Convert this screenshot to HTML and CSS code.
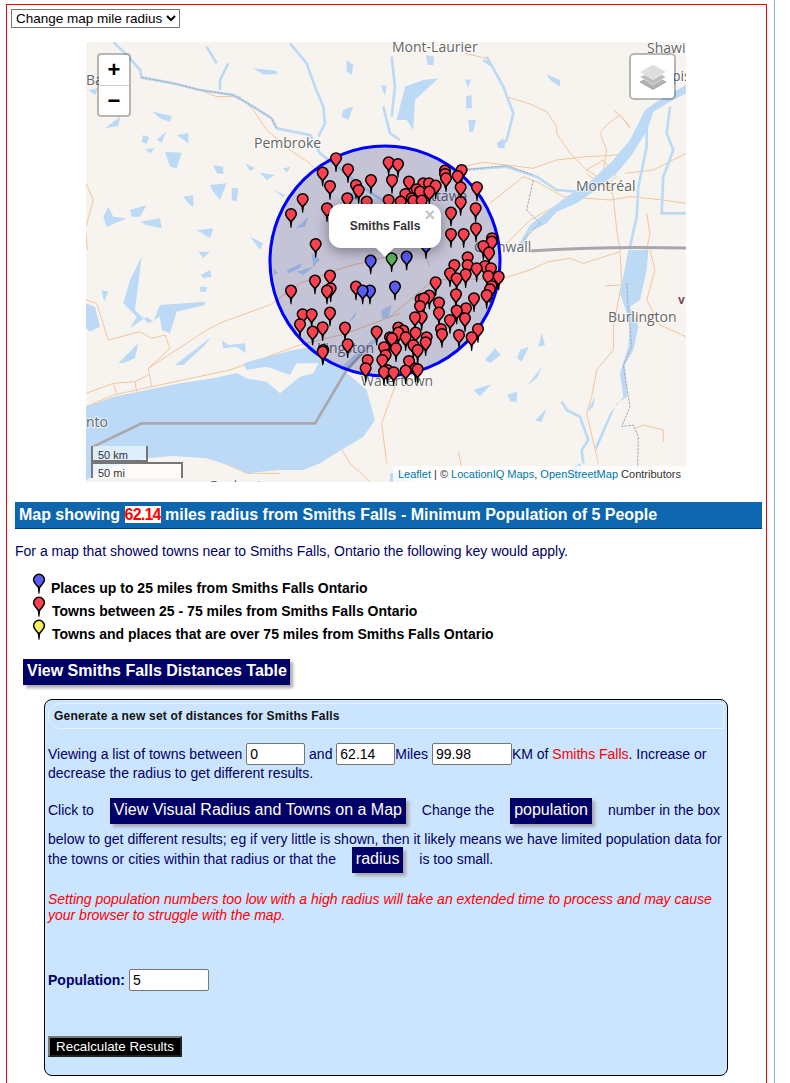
FILE: index.html
```html
<!DOCTYPE html>
<html lang="en">
<head>
<meta charset="utf-8">
<title>Smiths Falls radius map</title>
<link rel="stylesheet" href="styles.css">
</head>
<body>
<div class="page">
<div class="frame">
  <select class="radius-select"><option>Change map mile radius</option></select>

  <div class="map">
    <svg class="map-canvas" viewBox="86 42 600 440" width="600" height="440" aria-hidden="true">
      <defs>
        <g id="pin">
          <path d="M-5 12L5 12L1.500 41L-1.500 41Z" fill="#000"/>
          <path d="M-16 0A16 16 0 1 1 16 0C16 8 6 17 0 24C-6 17-16 8-16 0Z" stroke="#000" stroke-width="4.5"/>
        </g>
        <use id="r" href="#pin" fill="#fa4150"/>
        <use id="b" href="#pin" fill="#5a5cf5"/>
        <use id="g" href="#pin" fill="#5cb85c"/>
        <use id="y" href="#pin" fill="#f8f060"/>
      </defs>

      <!-- roads -->
      <g class="road" transform="scale(.33333)">
        <path d="M258 550L280 600L258 680M258 700L262 750"/>
        <path d="M420 235L520 250L600 270L650 290L720 290L760 330L800 390L870 450L930 490L1000 570"/>
      </g>
      <g class="road" transform="translate(390 0) scale(.33333)">
        <path d="M225 160L290 175L330 235L350 290L420 312L470 335L500 380L500 400L540 460L590 510L640 540"/>
        <path d="M215 500L280 487L350 495L430 505L500 480L590 470L680 465L700 455"/>
        <path d="M720 380L690 345L650 375L630 400L650 450L640 510L670 590L680 690L690 750"/>
        <path d="M770 340L740 395L710 440L670 490L620 560L530 600L420 660L340 740"/>
        <path d="M705 520L790 510L888 460"/>
        <path d="M300 610L400 530L440 545L520 590L660 600L720 590L820 600L888 610"/>
        <path d="M670 330L695 350L720 385M590 510L640 480L680 530L640 560L590 520M770 640L780 700L770 750"/>
      </g>
      <g class="road" transform="translate(80 250) scale(.33333)">
        <path d="M18 150L50 160L85 270L180 245L215 265L255 255L270 295L205 355L215 410L100 435L18 470"/>
        <path d="M205 355L380 240L430 215L570 165L660 100L800 50L960 10"/>
        <path d="M215 410L450 360L660 285L800 250L960 190"/>
        <path d="M18 430L100 400L165 395L205 375M100 400L110 430M165 395L170 425"/>
        <path d="M780 590L810 640L870 695M400 625L500 670L600 670"/>
        <path d="M950 395L905 520L920 640"/>
      </g>
      <g class="road" transform="translate(390 250) scale(.33333)">
        <path d="M340 85L420 60L475 35L540 25L580 40L690 5"/>
        <path d="M690 0L695 100L670 230L670 300L620 360L605 440L590 490L625 640"/>
        <path d="M780 0L795 60L770 150L810 225L888 260"/>
        <path d="M645 108L690 105M735 535L760 525L820 540L820 575M205 605L215 650"/>
        <path d="M120 50L100 0M0 200L130 90L340 85"/>
      </g>

      <!-- water -->
      <g class="water" transform="scale(.33333)">
        <path class="river" d="M340 126L385 170L420 210L425 232L520 250L600 270L700 285L760 320L815 355L830 385L930 405L960 460L1000 490L1060 540L1130 590L1200 640"/>
        <path class="river" d="M870 130L920 190L945 260L970 320L975 370L955 410M685 190L660 240L660 270M620 140L650 190M1150 320L1170 400L1200 420"/>
        <path d="M760 205L830 212L830 222L790 224ZM1040 180L1060 195L1055 225L1040 215ZM1142 255L1160 258L1155 288ZM1030 330L1060 318L1045 360L1025 350ZM457 335L515 348L510 365L480 355ZM315 385L360 350L355 378ZM430 405L448 412L440 432L425 425ZM470 420L498 395L485 428ZM530 405L565 400L565 430ZM435 447L465 445L450 460ZM495 455L545 458L530 505L510 500ZM640 495L670 500L670 522L650 520ZM735 490L765 505L750 512ZM780 518L825 525L800 540ZM850 505L872 500L860 518ZM630 555L680 550L660 600L640 575ZM695 565L715 565L710 605L695 600ZM820 570L855 585L850 592ZM550 590L580 585L580 622L565 610ZM325 620L340 650L380 655L320 680L310 650ZM390 630L440 615L420 650L395 650ZM420 665L480 655L485 685L440 675ZM590 690L640 685L630 715ZM750 710L790 730L780 750ZM265 270L295 265L285 285ZM888 685L925 650L915 680ZM1040 575L1075 580L1070 600L1045 600Z"/>
      </g>
      <g class="water" transform="translate(390 0) scale(.33333)">
        <path class="river" d="M220 510L350 500L440 530L500 570L560 575M290 170L340 260L370 340L350 420L330 440M840 320L830 400L850 450L820 530L815 640L888 640M770 350L770 440L745 560L740 650L720 740M5 170L15 260L5 350M280 180L310 200"/>
        <path d="M888 255L888 280L840 305L790 335L772 390L725 465L680 520L610 575L560 610L500 635L470 670L420 695L395 748L380 745L420 675L465 640L530 590L600 545L665 485L720 420L765 330L800 305ZM108 165L132 170L130 195L112 195ZM225 240L243 238L235 265ZM228 290L245 285L245 325L228 325ZM235 360L258 360L250 395L238 395ZM468 222L510 240L510 260L480 240ZM320 430L340 415L345 445L325 445ZM45 260L100 240L145 235L75 300L70 390L50 360L20 360Z"/>
      </g>
      <g class="water" transform="translate(80 250) scale(.33333)">
        <path d="M18 470L100 440L200 420L300 400L400 385L470 370L500 385L560 395L600 430L660 380L700 370L720 330L790 360L860 420L885 510L850 560L800 590L720 640L670 660L600 660L500 670L460 650L380 625L280 618L200 625L100 650L18 690Z"/>
        <path d="M490 340L560 320L640 300L700 290L730 340L650 340L630 375L560 350L500 360ZM18 160L45 170L60 230L30 245L18 235ZM65 120L85 125L72 155ZM185 20L150 90L130 160L170 200L150 235L200 200L220 215L240 165L375 155L375 165L290 185L270 250L245 240L240 200L205 220L165 180ZM115 340L175 280L165 325L130 340ZM285 345L395 260L370 290L310 345ZM425 270L445 285L495 280L497 310L470 290L430 295ZM355 5L390 5L370 25ZM362 75L390 60L395 80L370 85ZM358 110L382 110L378 125L362 125Z"/>
        <path d="M620 60L665 40L660 55L625 70ZM580 55L595 70L580 75ZM650 65L700 50L670 75ZM695 10L720 30L700 50ZM830 180L805 220L825 200ZM905 180L935 165L925 205L905 205ZM790 370L840 320L885 280L900 250L840 300L780 355Z"/>
      </g>
      <g class="water" transform="translate(390 250) scale(.33333)">
        <path d="M715 0L775 0L770 60L750 150L720 170L745 230L730 300L705 345L712 440L680 460L650 530L620 600L615 590L660 490L700 440L690 370L715 290L720 220L690 130ZM455 250L465 285L445 290ZM390 300L417 290L395 335L382 325ZM285 330L315 295L332 315L300 340ZM410 408L458 348L440 385ZM250 420L305 402L270 438ZM352 435L382 424L380 455L362 455ZM435 512L470 475L455 515ZM590 485L615 440L610 470ZM0 670L70 670L60 695L0 695ZM490 690L570 640L590 690Z"/>
        <path class="river" d="M515 455L530 480L570 500L595 570L575 600L580 640"/>
      </g>

      <!-- motorways and borders -->
      <g class="motorway" transform="translate(80 250) scale(.33333)">
        <path d="M40 590L185 520L705 520L800 360L870 285"/>
      </g>
      <path class="motorway" d="M530 251Q600 246 686 248"/>
      <g class="border" transform="translate(390 250) scale(.33333)">
        <path d="M710 100L715 180L725 290L700 345L715 440L720 470L695 530L730 525L745 560L742 690"/>
      </g>
      <g class="border" transform="translate(390 0) scale(.33333)">
        <path d="M430 540L410 630L450 670L400 720M215 510L350 497L430 525"/>
      </g>
      <g class="border" transform="scale(.33333)">
        <path d="M425 232L520 250L600 270L700 285L760 320L815 355L830 385"/>
      </g>

      <!-- labels -->
      <text class="label" x="392" y="52">Mont-Laurier</text>
      <text class="label" x="647" y="53">Shawi</text>
      <text class="label" x="672" y="81">pis</text>
      <text class="label" x="86" y="85">Ba</text>
      <text class="label" x="254" y="148">Pembroke</text>
      <text class="label" x="576" y="191">Montréal</text>
      <text class="label" x="608" y="322">Burlington</text>
      <text class="label" x="86" y="427">nto</text>
      <text class="label" x="210" y="491">Rochester</text>
      <text class="label" x="420" y="201">Ottawa</text>
      <text class="label" x="474" y="252">Cornwall</text>
      <text class="label" x="317" y="353">Kingston</text>
      <text class="label" x="361" y="386">Watertown</text>
      <text class="label state" x="678" y="304">v</text>

      <circle class="radius" cx="385" cy="261" r="115"/>

      <!-- markers -->
      <g transform="translate(270 140) scale(.33333)">
        <use href="#r" x="198" y="55"/><use href="#r" x="356" y="67"/><use href="#r" x="384" y="72"/><use href="#r" x="234" y="88"/><use href="#r" x="525" y="92"/><use href="#r" x="575" y="90"/><use href="#r" x="158" y="98"/><use href="#r" x="525" y="102"/><use href="#r" x="563" y="108"/><use href="#r" x="528" y="115"/><use href="#r" x="303" y="120"/><use href="#r" x="366" y="120"/><use href="#r" x="417" y="125"/><use href="#r" x="460" y="130"/><use href="#r" x="477" y="130"/><use href="#r" x="258" y="135"/><use href="#r" x="497" y="137"/><use href="#r" x="180" y="138"/><use href="#r" x="572" y="142"/><use href="#r" x="621" y="142"/><use href="#r" x="440" y="148"/><use href="#r" x="266" y="150"/><use href="#r" x="450" y="155"/><use href="#r" x="478" y="155"/><use href="#r" x="406" y="162"/><use href="#r" x="232" y="175"/><use href="#r" x="425" y="175"/><use href="#r" x="98" y="177"/><use href="#r" x="356" y="180"/><use href="#r" x="430" y="182"/><use href="#r" x="455" y="182"/><use href="#r" x="290" y="185"/><use href="#r" x="392" y="185"/><use href="#r" x="572" y="186"/><use href="#r" x="171" y="205"/><use href="#r" x="617" y="205"/><use href="#r" x="543" y="218"/><use href="#r" x="63" y="222"/><use href="#r" x="618" y="265"/><use href="#r" x="543" y="282"/><use href="#r" x="581" y="282"/><use href="#r" x="666" y="295"/><use href="#r" x="665" y="305"/><use href="#r" x="137" y="312"/><use href="#r" x="640" y="318"/><use href="#r" x="657" y="338"/><use href="#b" x="468" y="315"/><use href="#r" x="593" y="352"/><use href="#g" x="365" y="355"/><use href="#b" x="410" y="350"/><use href="#b" x="302" y="362"/>
      </g>
      <g transform="translate(270 260) scale(.33333)">
        <use href="#r" x="553" y="15"/><use href="#r" x="593" y="15"/><use href="#r" x="645" y="18"/><use href="#r" x="620" y="25"/><use href="#r" x="663" y="25"/><use href="#r" x="540" y="40"/><use href="#r" x="587" y="43"/><use href="#r" x="180" y="47"/><use href="#r" x="655" y="48"/><use href="#r" x="686" y="50"/><use href="#r" x="560" y="55"/><use href="#r" x="135" y="62"/><use href="#r" x="497" y="67"/><use href="#r" x="665" y="78"/><use href="#r" x="258" y="80"/><use href="#r" x="182" y="85"/><use href="#r" x="660" y="88"/><use href="#r" x="63" y="92"/><use href="#r" x="171" y="92"/><use href="#b" x="300" y="92"/><use href="#b" x="278" y="92"/><use href="#b" x="375" y="80"/><use href="#r" x="558" y="103"/><use href="#r" x="650" y="105"/><use href="#r" x="478" y="107"/><use href="#r" x="612" y="115"/><use href="#r" x="452" y="118"/><use href="#r" x="462" y="115"/><use href="#r" x="507" y="128"/><use href="#r" x="450" y="138"/><use href="#r" x="588" y="145"/><use href="#r" x="560" y="152"/><use href="#r" x="180" y="158"/><use href="#r" x="507" y="158"/><use href="#r" x="98" y="163"/><use href="#r" x="125" y="163"/><use href="#r" x="455" y="170"/><use href="#r" x="435" y="172"/><use href="#r" x="585" y="175"/><use href="#r" x="540" y="180"/><use href="#r" x="90" y="193"/><use href="#r" x="158" y="202"/><use href="#r" x="225" y="203"/><use href="#r" x="385" y="203"/><use href="#r" x="513" y="207"/><use href="#r" x="624" y="207"/><use href="#r" x="400" y="212"/><use href="#r" x="128" y="215"/><use href="#r" x="320" y="215"/><use href="#r" x="385" y="218"/><use href="#r" x="437" y="218"/><use href="#r" x="516" y="222"/><use href="#r" x="567" y="225"/><use href="#r" x="360" y="232"/><use href="#r" x="407" y="232"/><use href="#r" x="470" y="232"/><use href="#r" x="605" y="232"/><use href="#r" x="366" y="235"/><use href="#r" x="467" y="247"/><use href="#r" x="233" y="253"/><use href="#r" x="430" y="255"/><use href="#r" x="342" y="262"/><use href="#r" x="378" y="265"/><use href="#r" x="160" y="270"/><use href="#r" x="443" y="270"/><use href="#r" x="158" y="275"/><use href="#r" x="347" y="285"/><use href="#r" x="293" y="300"/><use href="#r" x="337" y="300"/><use href="#r" x="417" y="303"/><use href="#r" x="287" y="325"/><use href="#r" x="437" y="325"/><use href="#r" x="443" y="328"/><use href="#r" x="352" y="330"/><use href="#r" x="407" y="332"/><use href="#r" x="342" y="335"/><use href="#r" x="371" y="337"/>
      </g>
    </svg>

    <div class="zoom-control">
      <span class="zoom-btn zoom-in">+</span>
      <span class="zoom-btn">−</span>
    </div>

    <div class="layers-control">
      <svg viewBox="0 0 26 26" width="26" height="26" aria-hidden="true">
        <path d="M13 11L26 18L13 25.500L0 18Z" fill="#b2b2b2" stroke="#8e8e8e" stroke-width=".6"/>
        <path d="M13 6L26 13L13 20.500L0 13Z" fill="#bdbdbd" stroke="#f4f4f4" stroke-width=".6"/>
        <path d="M13 .5L26 8L13 15.500L0 8Z" fill="#dedede" stroke="#f6f6f6" stroke-width=".6"/>
      </svg>
    </div>

    <div class="scale">
      <div class="scale-km">50 km</div>
      <div class="scale-mi">50 mi</div>
    </div>

    <div class="attribution"><a>Leaflet</a> | © <a>LocationIQ Maps</a>, <a>OpenStreetMap</a> Contributors</div>

    <div class="popup">
      <span class="popup-close">×</span>
      <span class="popup-text">Smiths Falls</span>
      <span class="popup-tip"></span>
    </div>
  </div>

  <h2 class="map-heading">Map showing <span class="heading-num">62.14</span> miles radius from Smiths Falls - Minimum Population of 5 People</h2>

  <p class="intro">For a map that showed towns near to Smiths Falls, Ontario the following key would apply.</p>

  <ul class="legend">
    <li class="legend-row"><svg class="legend-pin" viewBox="-20 -20 40 62" aria-hidden="true"><use href="#b"/></svg><b>Places up to 25 miles from Smiths Falls Ontario</b></li>
    <li class="legend-row"><svg class="legend-pin" viewBox="-20 -20 40 62" aria-hidden="true"><use href="#r"/></svg><b class="nudge">Towns between 25 - 75 miles from Smiths Falls Ontario</b></li>
    <li class="legend-row"><svg class="legend-pin" viewBox="-20 -20 40 62" aria-hidden="true"><use href="#y"/></svg><b class="nudge">Towns and places that are over 75 miles from Smiths Falls Ontario</b></li>
  </ul>

  <a class="table-btn">View Smiths Falls Distances Table</a>

  <section class="panel">
    <h3 class="panel-title">Generate a new set of distances for Smiths Falls</h3>
    <p class="viewing">Viewing a list of towns between <input class="field field-sm" value="0"> and <input class="field field-sm" value="62.14">Miles <input class="field field-lg" value="99.98">KM of <span class="place">Smiths Falls</span>. Increase or decrease the radius to get different results.</p>
    <p class="click">Click to <a class="inline-btn">View Visual Radius and Towns on a Map</a> Change the <a class="inline-btn">population</a> number in the box below to get different results; eg if very little is shown, then it likely means we have limited population data for the towns or cities within that radius or that the <a class="inline-btn">radius</a> is too small.</p>
    <p class="warning">Setting population numbers too low with a high radius will take an extended time to process and may cause your browser to struggle with the map.</p>
    <p class="pop-row"><label class="pop-label">Population:</label> <input class="field field-lg" value="5"></p>
    <button class="recalc" type="button">Recalculate Results</button>
  </section>
</div>
</div>
</body>
</html>
```
FILE: styles.css
```css
* { box-sizing: border-box; }
html, body { margin: 0; padding: 0; background: #fff; }
body { font-family: "Liberation Sans", Arial, sans-serif; font-size: 14px; color: #000066; overflow: hidden; }

.page { width: 775px; height: 1083px; padding: 4px 7px 0 6px; border-right: 1px solid #8fb8b8; }
.frame { border: 1px solid #f00; border-bottom: 0; height: 1079px; padding: 4px 4px 0 4px; position: relative; }

.radius-select { display: block; width: 169px; height: 19px; font: 13.5px "Liberation Sans", Arial, sans-serif; color: #000; background: #fff; padding: 0; margin: 0 0 14px 0; }

.map { position: relative; width: 600px; height: 440px; margin: 0 0 20px 75px; background: #f7f4f0; overflow: hidden; }
.map-canvas { display: block; }

.road path { fill: none; stroke: #f2c59c; stroke-width: 3; }
.water path { fill: #bcdaf5; stroke: none; }
.water path.river { fill: none; stroke: #bcdaf5; stroke-width: 8; stroke-linejoin: round; }
.motorway path, path.motorway { fill: none; stroke: #a9a6ae; stroke-width: 8; }
path.motorway { stroke-width: 3; }
.border path { fill: none; stroke: #a6a6b4; stroke-width: 3; stroke-dasharray: 8 3; }
.label { font: 14px "Open Sans", "Noto Sans", sans-serif; fill: #666; stroke: #fff; stroke-width: 2px; stroke-opacity: .65; paint-order: stroke; }
.state { fill: #7a4d5c; font-weight: 700; font-size: 12px; }
.radius { fill: #00006e; fill-opacity: .2; stroke: #00f; stroke-width: 3; }

.zoom-control { position: absolute; left: 11px; top: 11px; width: 34px; height: 64px; border: 2px solid rgba(0,0,0,.25); border-radius: 4px; background: #fff; background-clip: padding-box; }
.zoom-btn { display: block; height: 30px; text-align: center; font: 700 22px/30px "Liberation Sans", Arial, sans-serif; color: #000; }
.zoom-in { border-bottom: 1px solid #ccc; height: 31px; }

.layers-control { position: absolute; left: 543px; top: 11px; width: 47px; height: 47px; border: 2px solid rgba(0,0,0,.25); border-radius: 5px; background: #fff; background-clip: padding-box; display: flex; align-items: center; justify-content: center; }

.scale { position: absolute; left: 5px; bottom: 4px; font: 11px/14px "Liberation Sans", Arial, sans-serif; color: #333; }
.scale-km { width: 57px; height: 16px; padding: 2px 5px 0; border: 2px solid #777; border-top: 0; background: rgba(255,255,255,.5); }
.scale-mi { width: 92px; height: 16px; padding: 2px 5px 0; border: 2px solid #777; border-bottom: 0; background: rgba(255,255,255,.7); }

.attribution { position: absolute; right: 0; bottom: 0; height: 16px; padding: 0 5px; font: 11px/16px "Liberation Sans", Arial, sans-serif; color: #333; background: rgba(255,255,255,.8); }
.attribution a { color: #0078a8; }

.popup { position: absolute; left: 243px; top: 162px; width: 112px; height: 44px; background: #fff; border-radius: 12px; box-shadow: 0 3px 14px rgba(0,0,0,.4); display: flex; align-items: center; justify-content: center; }
.popup-text { font: 700 12px "Liberation Sans", Arial, sans-serif; color: #333; }
.popup-close { position: absolute; right: 6px; top: 2px; font: 700 18px/18px Tahoma, "Liberation Sans", sans-serif; color: #c3c3c3; }
.popup-tip { position: absolute; left: 46px; top: 43px; width: 20px; height: 10px; overflow: hidden; }
.popup-tip::before { content: ""; position: absolute; left: 3px; top: -7px; width: 14px; height: 14px; background: #fff; transform: rotate(45deg); }

.map-heading { margin: 0 0 14px 4px; width: 747px; height: 27px; padding: 0 0 0 4px; font: 700 16px/25px "Liberation Sans", Arial, sans-serif; letter-spacing: -.02px; color: #fff; background: #0d66ae; border-bottom: 1px solid #003a7a; white-space: nowrap; }
.heading-num { background: #fff; color: #f00; letter-spacing: -.8px; }

.intro { margin: 0 0 14px 4px; line-height: 16px; }

.legend { list-style: none; margin: 0 0 0 20px; padding: 0; color: #000; }
.legend-row { display: flex; align-items: flex-end; height: 23px; gap: 5px; }
.legend-pin { width: 14px; height: 21px; margin: 0 0 0 1px; position: relative; top: -2px; }
.legend-row b { font-size: 14px; line-height: 16px; }
.legend-row .nudge { margin-left: 1px; }

.table-btn { display: block; width: 267px; height: 26px; margin: 17px 0 14px 12px; padding: 0 0 0 4px; font: 700 16px/24px "Liberation Sans", Arial, sans-serif; color: #fff; background: #000066; box-shadow: 3px 3px 3px #aaa; white-space: nowrap; }

.panel { width: 684px; height: 377px; margin-left: 33px; padding: 3px; background: #cce5ff; border: 1px solid #000; border-radius: 8px; }
.panel-title { margin: 0 0 14px; height: 26px; padding-left: 5px; font: 700 12px/24px "Liberation Sans", Arial, sans-serif; letter-spacing: .2px; color: #111; border: 1px solid #eaf4ff; border-radius: 12px 0 0 12px; }

.viewing { margin: 0; line-height: 16px; height: 55px; }
.field { font: 14px "Liberation Sans", Arial, sans-serif; color: #000; height: 22px; padding: 1px 3px; background: #fff; border: 1px solid #767676; border-radius: 2px; vertical-align: baseline; }
.field-sm { width: 59px; }
.field-lg { width: 80px; }
.place { color: #f00; }

.click { margin: 0 0 11px; line-height: 16px; }
.inline-btn { display: inline-block; height: 26px; margin: 0 12px 7px; padding: 0 4px; font-size: 16px; line-height: 24px; color: #fff; background: #000066; box-shadow: 3px 3px 3px #aaa; }

.warning { margin: 0 0 46px; line-height: 16px; font-style: italic; color: #f00; }

.pop-row { margin: 0 0 45px; }
.pop-label { font-weight: 700; }

.recalc { display: block; width: 134px; height: 21px; padding: 0; font: 13.333px "Liberation Sans", Arial, sans-serif; color: #fff; background: #000; border: 2px outset #777; }
```
